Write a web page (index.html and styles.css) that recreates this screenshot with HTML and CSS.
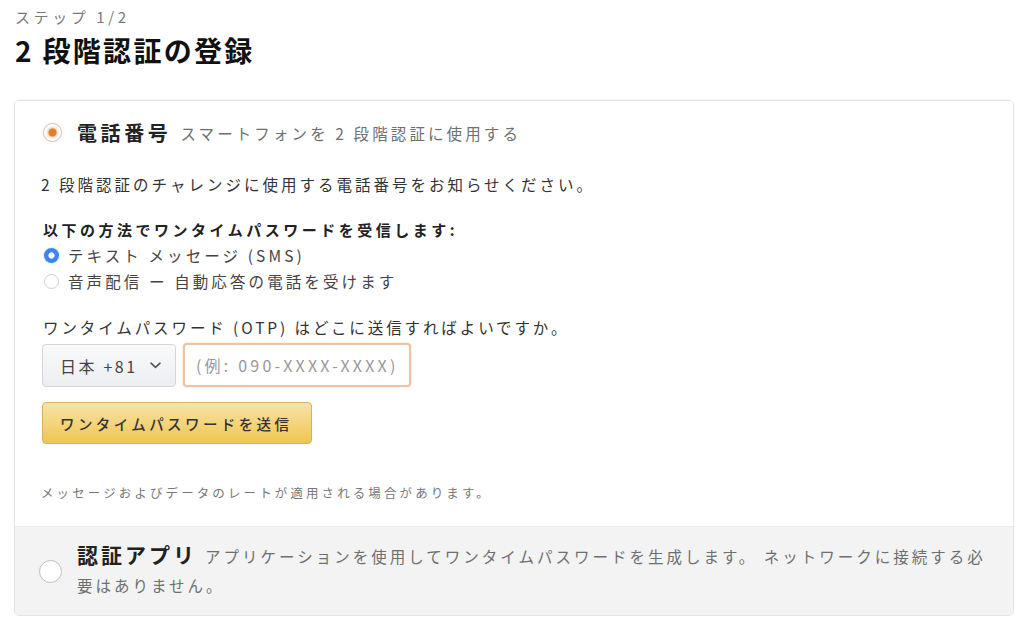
FILE: index.html
```html
<!DOCTYPE html>
<html lang="ja">
<head>
<meta charset="utf-8">
<title>2 段階認証の登録</title>
<link rel="stylesheet" href="styles.css">
</head>
<body>
<main class="page">
  <div class="step">ステップ 1/2</div>
  <h1 class="title">2 段階認証の登録</h1>
  <div class="box">
    <section class="opt opt-active">
      <div class="opt-head">
        <span class="radio radio-on"></span>
        <span class="opt-title">電話番号</span>
        <span class="opt-sub">スマートフォンを 2 段階認証に使用する</span>
      </div>
      <p class="desc">2 段階認証のチャレンジに使用する電話番号をお知らせください。</p>
      <p class="label">以下の方法でワンタイムパスワードを受信します:</p>
      <div class="choice"><span class="mini-radio mini-on"></span>テキスト メッセージ (SMS)</div>
      <div class="choice"><span class="mini-radio"></span>音声配信 ー 自動応答の電話を受けます</div>
      <p class="otp-label">ワンタイムパスワード (OTP) はどこに送信すればよいですか。</p>
      <div class="phone-row">
        <div class="select">
          <span>日本 +81</span>
          <svg class="chev" width="11" height="7" viewBox="0 0 11 7"><path d="M1 1.2 L5.5 5.4 L10 1.2" fill="none" stroke="#555" stroke-width="1.6" stroke-linecap="round" stroke-linejoin="round"/></svg>
        </div>
        <div class="input">(例: 090-XXXX-XXXX)</div>
      </div>
      <div class="btn">ワンタイムパスワードを送信</div>
      <p class="note">メッセージおよびデータのレートが適用される場合があります。</p>
    </section>
    <section class="opt opt-inactive">
      <span class="radio radio-off"></span>
      <p class="app-text"><span class="app-title">認証アプリ</span><span class="app-desc">アプリケーションを使用してワンタイムパスワードを生成します。 ネットワークに接続する必</span><span class="app-desc">要はありません。</span></p>
    </section>
  </div>
</main>
</body>
</html>
```

FILE: styles.css
```css
html, body {
  margin: 0;
  padding: 0;
  background: #ffffff;
}

body {
  font-family: "Noto Sans CJK JP", "Noto Sans", sans-serif;
  color: #222;
}

.page {
  width: 1000px;
  padding: 7px 0 0 14px;
}

.step {
  font-size: 15px;
  line-height: 20px;
  letter-spacing: 3.6px;
  color: #7a7a7a;
  padding-left: 1px;
}

.title {
  margin: 5px 0 0 0;
  font-size: 28px;
  line-height: 36px;
  font-weight: 700;
  letter-spacing: 2.3px;
  color: #111;
  padding-left: 1px;
}

.box {
  margin-top: 32px;
  border: 1px solid #e4e4e4;
  border-radius: 5px;
  overflow: hidden;
  box-shadow: 0 -1px 2px rgba(0,0,0,0.04);
}

.opt-active {
  padding: 16px 26px 23px 26px;
  background: #ffffff;
}

.opt-head {
  display: flex;
  align-items: center;
  height: 30px;
}

.radio {
  display: inline-block;
  box-sizing: border-box;
  border-radius: 50%;
  flex: none;
}

.radio-on {
  width: 19px;
  height: 19px;
  margin: 0 0 0 2px;
  border: 1px solid #d2c6bb;
  background: radial-gradient(circle, #e1802a 0, #e1802a 3.5px, #f6d4b4 4.5px, #fdf3ea 6px, #ffffff 8px);
  box-shadow: 0 0 2px rgba(228,121,17,0.25);
}

.opt-title {
  margin-left: 15px;
  font-size: 20px;
  font-weight: 700;
  letter-spacing: 3.6px;
  color: #222;
}

.opt-sub {
  margin-left: 9px;
  font-size: 15.5px;
  letter-spacing: 3.1px;
  color: #6f6f6f;
  position: relative;
  top: 1px;
}

.desc {
  margin: 25px 0 0 0;
  font-size: 15.5px;
  line-height: 24px;
  letter-spacing: 3px;
  color: #333;
}

.label {
  margin: 22px 0 0 2px;
  font-size: 15px;
  line-height: 24px;
  font-weight: 700;
  letter-spacing: 3.5px;
  color: #222;
}

.choice {
  display: flex;
  align-items: center;
  height: 26px;
  margin-left: 3px;
  font-size: 15.5px;
  letter-spacing: 3.1px;
  color: #444;
}

.mini-radio {
  width: 15px;
  height: 15px;
  box-sizing: border-box;
  border-radius: 50%;
  border: 1px solid #cfcfcf;
  background: #ffffff;
  margin-right: 9px;
  flex: none;
}

.mini-on {
  border: none;
  background: radial-gradient(circle, #ffffff 0, #ffffff 2.6px, #3d86e8 3.6px, #3d86e8 100%);
  box-shadow: 0 0 2px rgba(60,130,230,0.5);
}

.otp-label {
  margin: 21px 0 0 2px;
  font-size: 15.5px;
  line-height: 24px;
  letter-spacing: 2.9px;
  color: #333;
}

.phone-row {
  display: flex;
  gap: 7px;
  margin-top: 5px;
  margin-left: 1px;
}

.select {
  box-sizing: border-box;
  width: 134px;
  height: 43px;
  display: flex;
  align-items: center;
  padding-left: 17px;
  border: 1px solid #d4d6da;
  border-radius: 4px;
  background: linear-gradient(#f9fafb, #eceef1);
  font-size: 16px;
  letter-spacing: 2.6px;
  color: #444;
}

.chev {
  margin-left: 12px;
}

.input {
  box-sizing: border-box;
  width: 228px;
  height: 44px;
  margin-top: -1px;
  display: flex;
  align-items: center;
  padding-left: 11px;
  border: 2px solid #efc3a2;
  border-radius: 4px;
  box-shadow: 0 0 2px rgba(228,121,17,0.35);
  background: #ffffff;
  font-size: 16px;
  letter-spacing: 3.2px;
  color: #999;
}

.btn {
  box-sizing: border-box;
  width: 270px;
  height: 42px;
  margin-top: 15px;
  margin-left: 1px;
  display: flex;
  align-items: center;
  padding-left: 17px;
  border: 1px solid #d6b260;
  border-radius: 4px;
  background: linear-gradient(#f8e3a9, #f0c550);
  font-size: 14.5px;
  font-weight: 500;
  letter-spacing: 3.4px;
  color: #333;
}

.note {
  margin: 39px 0 0 0;
  font-size: 12.5px;
  line-height: 20px;
  letter-spacing: 3.1px;
  color: #777;
}

.opt-inactive {
  display: flex;
  align-items: center;
  padding: 15px 24px 15px 24px;
  background: #f3f3f3;
  border-top: 1px solid #ececec;
}

.radio-off {
  width: 23px;
  height: 23px;
  border: 1.5px solid #bdbdbd;
  background: #ffffff;
  margin-right: 15px;
}

.app-text {
  margin: 0;
  line-height: 29px;
}

.app-title {
  display: inline-block;
  line-height: 24px;
  font-size: 21px;
  font-weight: 700;
  letter-spacing: 3px;
  color: #222;
  margin-right: 8px;
}

.app-desc {
  font-size: 15.5px;
  letter-spacing: 3px;
  color: #6f6f6f;
}
```
